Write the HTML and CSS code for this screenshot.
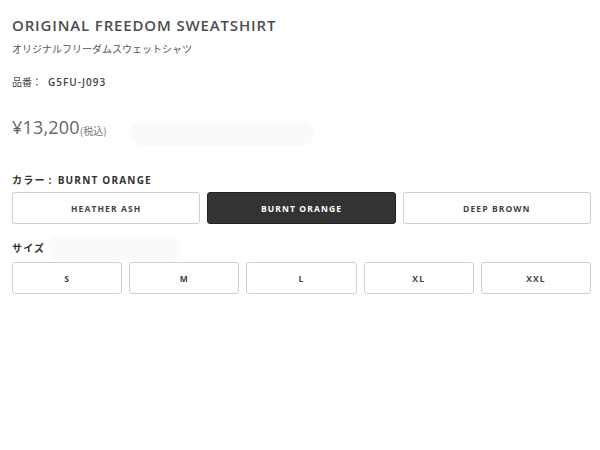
FILE: index.html
```html
<!DOCTYPE html>
<html lang="ja">
<head>
<meta charset="utf-8">
<link rel="stylesheet" href="styles.css">
</head>
<body>
<div class="product">
  <h1 class="title">ORIGINAL FREEDOM SWEATSHIRT</h1>
  <p class="subtitle">オリジナルフリーダムスウェットシャツ</p>
  <p class="sku"><span class="sku-label">品番：</span>G5FU-J093</p>
  <div class="price-row">
    <span class="price">¥13,200</span><span class="tax">(税込)</span>
    <span class="placeholder price-ph"></span>
  </div>
  <div class="option">
    <div class="option-label">カラー<span class="colon">:</span>BURNT ORANGE</div>
    <div class="choices colors">
      <button class="choice">HEATHER ASH</button>
      <button class="choice active">BURNT ORANGE</button>
      <button class="choice">DEEP BROWN</button>
    </div>
  </div>
  <div class="option size-option">
    <div class="option-label size-label">サイズ<span class="placeholder size-ph"></span></div>
    <div class="choices sizes">
      <button class="choice">S</button>
      <button class="choice">M</button>
      <button class="choice">L</button>
      <button class="choice">XL</button>
      <button class="choice">XXL</button>
    </div>
  </div>
</div>
</body>
</html>
```
FILE: styles.css
```css
* { box-sizing: border-box; }
body {
  margin: 0;
  background: #fff;
  font-family: "Open Sans", "Noto Sans CJK JP", sans-serif;
  color: #444;
}
.product {
  padding: 14px 9px 0 12px;
}
.title {
  margin: 0;
  font-size: 15px;
  font-weight: 600;
  letter-spacing: 0.85px;
  color: #4d4d4d;
  line-height: 22px;
}
.subtitle {
  margin: 6px 0 0;
  font-size: 10px;
  line-height: 14px;
  color: #555;
  font-family: "Noto Sans CJK JP", sans-serif;
}
.sku {
  margin: 19px 0 0;
  font-size: 10px;
  line-height: 14px;
  font-weight: 600;
  letter-spacing: 1px;
  color: #444;
}
.sku-label {
  font-family: "Noto Sans CJK JP", sans-serif;
  font-weight: 400;
  letter-spacing: 0;
  margin-right: 6px;
}
.price-row {
  margin-top: 25px;
  display: flex;
  align-items: flex-start;
  height: 26px;
}
.price {
  font-size: 18px;
  line-height: 26px;
  color: #666;
  letter-spacing: 0.2px;
}
.tax {
  font-size: 10px;
  line-height: 14px;
  color: #777;
  margin-top: 10px;
  font-family: "Noto Sans CJK JP", sans-serif;
}
.placeholder {
  display: block;
  background: #fafafa;
  border-radius: 12px;
}
.price-ph {
  width: 183px;
  height: 25px;
  margin-left: 24px;
  margin-top: 7px;
}
.option { margin-top: 33px; }
.option-label {
  font-size: 10px;
  font-weight: 700;
  letter-spacing: 1.2px;
  color: #333;
  line-height: 14px;
  display: flex;
  align-items: center;
}
.colon { margin: 0 5px 0 3px; }
.choices {
  display: grid;
  gap: 7px;
  margin-top: 5px;
}
.colors { grid-template-columns: repeat(3, 1fr); }
.sizes { grid-template-columns: repeat(5, 1fr); margin-top: 2px; }
.choice {
  height: 32px;
  background: #fff;
  border: 1px solid #cfcfcf;
  border-radius: 3px;
  font-family: "Open Sans", sans-serif;
  font-size: 8.5px;
  font-weight: 700;
  letter-spacing: 1.1px;
  color: #444;
  padding: 0;
}
.choice.active {
  background: #333;
  border-color: #222;
  color: #fff;
}
.size-option { margin-top: 12px; }
.size-label { height: 24px; }
.size-ph {
  width: 133px;
  height: 24px;
  margin-left: 3px;
}
```
